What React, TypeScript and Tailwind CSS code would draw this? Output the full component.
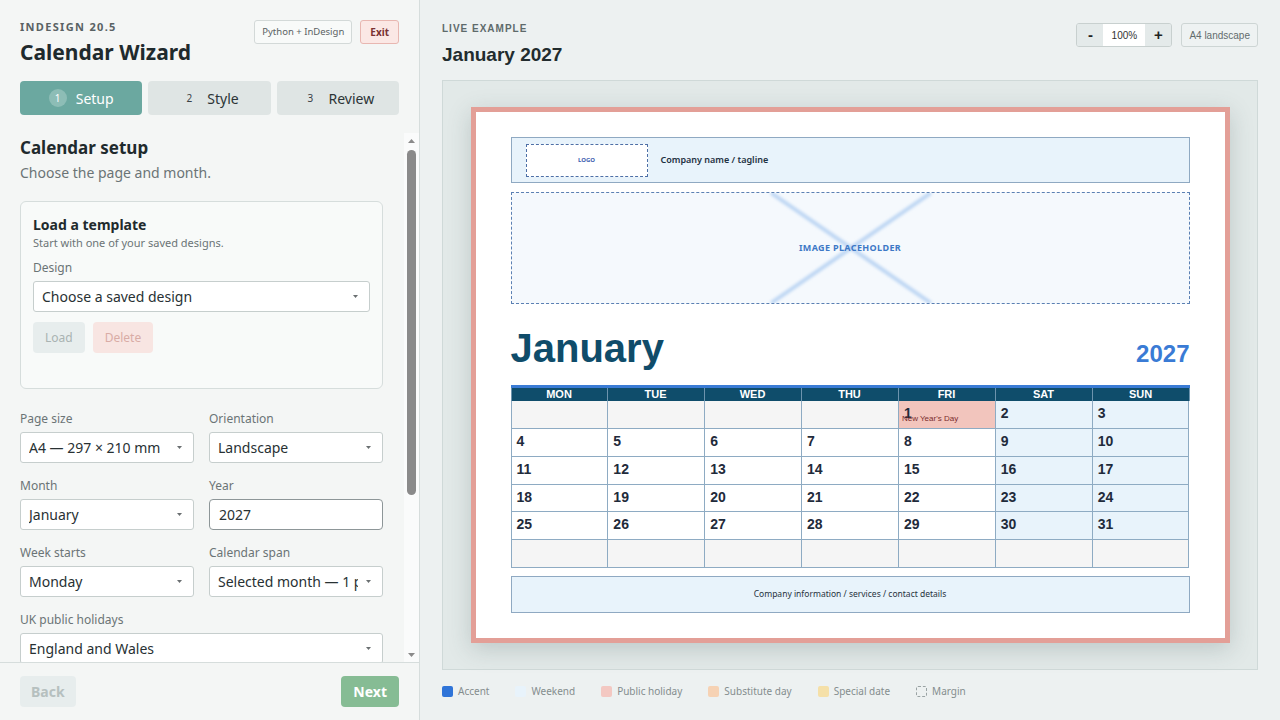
import React from 'react'

type Cell = { day?: number; weekend?: boolean; holiday?: string }

const WEEKDAYS = ['MON', 'TUE', 'WED', 'THU', 'FRI', 'SAT', 'SUN']

// 1 Jan 2027 falls on a Friday, weeks start on Monday
const buildMonth = (): Cell[] => {
  const cells: Cell[] = []
  const offset = 4
  for (let i = 0; i < 42; i++) {
    const d = i - offset + 1
    const col = i % 7
    if (d < 1 || d > 31) cells.push({})
    else cells.push({ day: d, weekend: col >= 5, holiday: d === 1 ? "New Year's Day" : undefined })
  }
  return cells
}

const Caret = () => (
  <svg width="5" height="3" viewBox="0 0 5 3" className="ml-2 shrink-0">
    <polygon points="0,0 5,0 2.5,3" fill="#6a6f71" />
  </svg>
)

const Select = ({ value }: { value: string }) => (
  <div className="flex h-[31px] items-center rounded-[3px] border border-[#c6cecd] bg-white pl-[8px] pr-[11px] text-[14px] text-[#283133]">
    <span className="flex-1 overflow-hidden whitespace-nowrap">{value}</span>
    <Caret />
  </div>
)

const Field = ({ label, children }: { label: string; children: React.ReactNode }) => (
  <div className="flex flex-col">
    <span className="mb-[5px] text-[12px] leading-[16px] text-[#6b7476]">{label}</span>
    {children}
  </div>
)

const ScrollBar = () => (
  <div className="flex w-[15px] shrink-0 flex-col items-center bg-[#fafbfb]">
    <div className="flex h-[15px] items-center justify-center">
      <svg width="7" height="4" viewBox="0 0 7 4">
        <polygon points="0,4 7,4 3.5,0" fill="#8a8a8a" />
      </svg>
    </div>
    <div className="mt-[2px] h-[345px] w-[9px] rounded-full bg-[#8a8a8a]" />
    <div className="flex-1" />
    <div className="flex h-[15px] items-center justify-center">
      <svg width="7" height="4" viewBox="0 0 7 4">
        <polygon points="0,0 7,0 3.5,4" fill="#8a8a8a" />
      </svg>
    </div>
  </div>
)

const Step = ({ n, label, active }: { n: number; label: string; active?: boolean }) => (
  <div
    className={`flex h-[34px] flex-1 items-center justify-center gap-[9px] rounded-[4px] text-[14px] ${
      active ? 'bg-[#6ba8a0] text-white' : 'bg-[#dfe5e4] text-[#2c3436]'
    }`}
  >
    <span
      className={`flex h-[18px] w-[18px] items-center justify-center rounded-full text-[10px] ${
        active ? 'bg-[#8dbdb6] text-white' : 'text-[#3a4244]'
      }`}
    >
      {n}
    </span>
    {label}
  </div>
)

const Sidebar = () => (
  <aside className="flex h-screen w-[420px] shrink-0 flex-col border-r border-[#d6dddc] bg-[#f4f6f5] font-['Noto_Sans',sans-serif]">
    <div className="px-[20px] pb-[18px] pt-[19px]">
      <div className="flex items-start justify-between">
        <div>
          <div className="text-[11px] font-bold leading-[16px] tracking-[0.12em] text-[#596264]">INDESIGN 20.5</div>
          <h1 className="mt-[2px] text-[21px] font-bold leading-[30px] text-[#1f2a2d]">Calendar Wizard</h1>
        </div>
        <div className="mt-[1px] flex gap-[8px]">
          <button className="h-[24px] rounded-[3px] border border-[#d3d9d8] bg-[#f8faf9] px-[7px] text-[9.5px] text-[#5a6264]">
            Python + InDesign
          </button>
          <button className="h-[24px] rounded-[3px] border border-[#e8b7b1] bg-[#fbe8e5] px-[9px] text-[10px] font-bold text-[#7a3232]">
            Exit
          </button>
        </div>
      </div>
      <div className="mt-[14px] flex gap-[6px]">
        <Step n={1} label="Setup" active />
        <Step n={2} label="Style" />
        <Step n={3} label="Review" />
      </div>
    </div>

    <div className="flex min-h-0 flex-1">
      <div className="flex-1 overflow-hidden pl-[20px] pr-[21px] pt-[3px]">
        <h2 className="text-[17px] font-bold leading-[24px] text-[#1f2a2d]">Calendar setup</h2>
        <p className="mt-[3px] text-[14px] leading-[20px] text-[#6b7476]">Choose the page and month.</p>

        <div className="mt-[18px] rounded-[6px] border border-[#d6dddc] bg-[#f8faf9] px-[12px] pb-[35px] pt-[13px]">
          <h3 className="text-[14px] font-bold leading-[20px] text-[#1f2a2d]">Load a template</h3>
          <p className="text-[11px] leading-[15px] text-[#6b7476]">Start with one of your saved designs.</p>
          <div className="mt-[10px]">
            <Field label="Design">
              <Select value="Choose a saved design" />
            </Field>
          </div>
          <div className="mt-[10px] flex gap-[8px]">
            <button className="h-[31px] rounded-[4px] bg-[#e7eded] px-[12px] text-[12px] text-[#a9b3b2]">Load</button>
            <button className="h-[31px] rounded-[4px] bg-[#f8e5e2] px-[12px] text-[12px] text-[#d9aca6]">Delete</button>
          </div>
        </div>

        <div className="mt-[22px] grid grid-cols-2 gap-x-[15px] gap-y-[15px]">
          <Field label="Page size">
            <Select value="A4 — 297 × 210 mm" />
          </Field>
          <Field label="Orientation">
            <Select value="Landscape" />
          </Field>
          <Field label="Month">
            <Select value="January" />
          </Field>
          <Field label="Year">
            <div className="flex h-[31px] items-center rounded-[4px] border border-[#8d9698] bg-white px-[9px] text-[14px] text-[#283133]">
              2027
            </div>
          </Field>
          <Field label="Week starts">
            <Select value="Monday" />
          </Field>
          <Field label="Calendar span">
            <Select value="Selected month — 1 page" />
          </Field>
          <div className="col-span-2">
            <Field label="UK public holidays">
              <Select value="England and Wales" />
            </Field>
          </div>
          <Field label="Substitute days">
            <Select value="Show" />
          </Field>
          <Field label="Rows">
            <Select value="6 weeks" />
          </Field>
          <div className="col-span-2">
            <Field label="Special dates">
              <div className="h-[96px] rounded-[3px] border border-[#c6cecd] bg-white" />
            </Field>
          </div>
        </div>
        <div className="h-[24px]" />
      </div>
      <ScrollBar />
    </div>

    <div className="flex h-[58px] shrink-0 items-center justify-between border-t border-[#d6dddc] px-[20px]">
      <button className="h-[31px] rounded-[4px] bg-[#e7eded] px-[11px] text-[14px] font-bold text-[#b6c0bf]">Back</button>
      <button className="h-[31px] rounded-[4px] bg-[#86bc94] px-[12px] text-[14px] font-bold text-white">Next</button>
    </div>
  </aside>
)

const CalendarPage = () => {
  const cells = buildMonth()
  return (
    <div className="flex h-[536px] w-[759px] flex-col border-[5px] border-[#e39f97] bg-white px-[35px] py-[25px] shadow-[0_6px_22px_rgba(60,80,80,0.22)]">
      <div className="flex h-[46px] items-center gap-[13px] border border-[#8fa9c2] bg-[#e8f3fb] pl-[14px]">
        <div className="flex h-[33px] w-[122px] items-center justify-center border border-dashed border-[#4d6fa6] bg-white font-['Noto_Sans',sans-serif] text-[6px] font-bold text-[#3c5db0]">
          LOGO
        </div>
        <span className="font-['Noto_Sans',sans-serif] text-[9px] font-semibold text-[#1e3142]">Company name / tagline</span>
      </div>

      <div className="relative mt-[9px] flex h-[112px] items-center justify-center border border-dashed border-[#5b80b3] bg-[#f5f9fd]">
        <svg className="absolute inset-0 h-full w-full" viewBox="0 0 679 112" preserveAspectRatio="none">
          <defs>
            <filter id="soft" x="-10%" y="-10%" width="120%" height="120%">
              <feGaussianBlur stdDeviation="1.4" />
            </filter>
          </defs>
          <g stroke="#bcd5f3" strokeWidth="4" filter="url(#soft)">
            <line x1="260" y1="0" x2="420" y2="112" />
            <line x1="420" y1="0" x2="260" y2="112" />
          </g>
        </svg>
        <span className="relative font-['Noto_Sans',sans-serif] text-[9px] font-bold tracking-[0.04em] text-[#3d78c6]">
          IMAGE PLACEHOLDER
        </span>
      </div>

      <div className="flex h-[81px] items-end justify-between font-['Liberation_Sans',Arial,sans-serif] font-bold">
        <span className="mb-[17px] text-[40px] leading-none text-[#0f4c6a]">January</span>
        <span className="mb-[19px] text-[24px] leading-none text-[#3a7bd5]">2027</span>
      </div>

      <div className="h-[3px] bg-[#3a7bd5]" />
      <div className="grid h-[13px] grid-cols-7 bg-[#0f4d6b] font-['Liberation_Sans',Arial,sans-serif]">
        {WEEKDAYS.map((d) => (
          <div key={d} className="border-r border-l-0 border-[#6d93ad] text-center text-[11px] font-bold leading-[13px] text-white first:border-l">
            {d}
          </div>
        ))}
      </div>
      <div className="grid h-[167px] grid-cols-7 grid-rows-6 border-l border-[#8eabc3] font-['Liberation_Sans',Arial,sans-serif]">
        {cells.map((c, i) => {
          const bg = !c.day ? 'bg-[#f5f5f5]' : c.holiday ? 'bg-[#f2c5bd]' : c.weekend ? 'bg-[#e8f3fb]' : 'bg-white'
          return (
            <div key={i} className={`border-b border-r border-[#8eabc3] pl-[5px] pt-[4px] ${bg}`}>
              {c.day && <div className="text-[14px] font-bold leading-[16px] text-[#1f2b3b]">{c.day}</div>}
              {c.holiday && (
                <div className="-ml-[2px] -mt-[7px] text-[8px] leading-[10px] text-[#7a2d2d]">{c.holiday}</div>
              )}
            </div>
          )
        })}
      </div>

      <div className="mt-[8px] flex h-[37px] items-center justify-center border border-[#8fa9c2] bg-[#e8f3fb] font-['Noto_Sans',sans-serif] text-[8.5px] text-[#27323d]">
        Company information / services / contact details
      </div>
    </div>
  )
}

const LegendItem = ({ swatch, label }: { swatch: string; label: string }) => (
  <div className="flex items-center gap-[5px]">
    <span className={`h-[11px] w-[11px] rounded-[2px] ${swatch}`} />
    <span>{label}</span>
  </div>
)

const Preview = () => (
  <main className="flex h-screen flex-1 flex-col bg-[#edf1f1] px-[22px] pt-[22px]">
    <div className="flex h-[58px] shrink-0 items-start justify-between font-['Liberation_Sans',Arial,sans-serif]">
      <div>
        <div className="text-[10px] font-bold leading-[14px] tracking-[0.1em] text-[#5e6a6b]">LIVE EXAMPLE</div>
        <div className="mt-[6px] text-[19px] font-bold leading-[26px] text-[#222c2e]">January 2027</div>
      </div>
      <div className="mt-[1px] flex items-center gap-[9px]">
        <div className="flex h-[24px] overflow-hidden rounded-[3px] border border-[#c8d0cf]">
          <span className="flex w-[26px] items-center justify-center bg-[#e4eaea] text-[15px] font-bold text-[#222]">-</span>
          <span className="flex w-[42px] items-center justify-center bg-white text-[10px] text-[#333]">100%</span>
          <span className="flex w-[26px] items-center justify-center bg-[#e4eaea] text-[15px] font-bold text-[#222]">+</span>
        </div>
        <div className="flex h-[24px] items-center rounded-[3px] border border-[#cdd5d4] bg-[#eef2f2] px-[7px] text-[10px] text-[#626c6d]">
          A4 landscape
        </div>
      </div>
    </div>

    <div className="flex min-h-0 flex-1 items-center justify-center border border-[#cfd9d8] bg-[#e2e9e8]">
      <CalendarPage />
    </div>

    <div className="flex h-[50px] shrink-0 items-center gap-[26px] pb-[8px] font-['Noto_Sans',sans-serif] text-[10px] text-[#848d8e]">
      <LegendItem swatch="bg-[#2f74d8]" label="Accent" />
      <LegendItem swatch="bg-[#e8f3fb]" label="Weekend" />
      <LegendItem swatch="bg-[#f3c8c2]" label="Public holiday" />
      <LegendItem swatch="bg-[#f6d2b4]" label="Substitute day" />
      <LegendItem swatch="bg-[#f5e0a8]" label="Special date" />
      <LegendItem swatch="border border-dashed border-[#9aa3a4]" label="Margin" />
    </div>
  </main>
)

export default function App() {
  return (
    <div className="flex h-screen w-full overflow-hidden">
      <Sidebar />
      <Preview />
    </div>
  )
}
